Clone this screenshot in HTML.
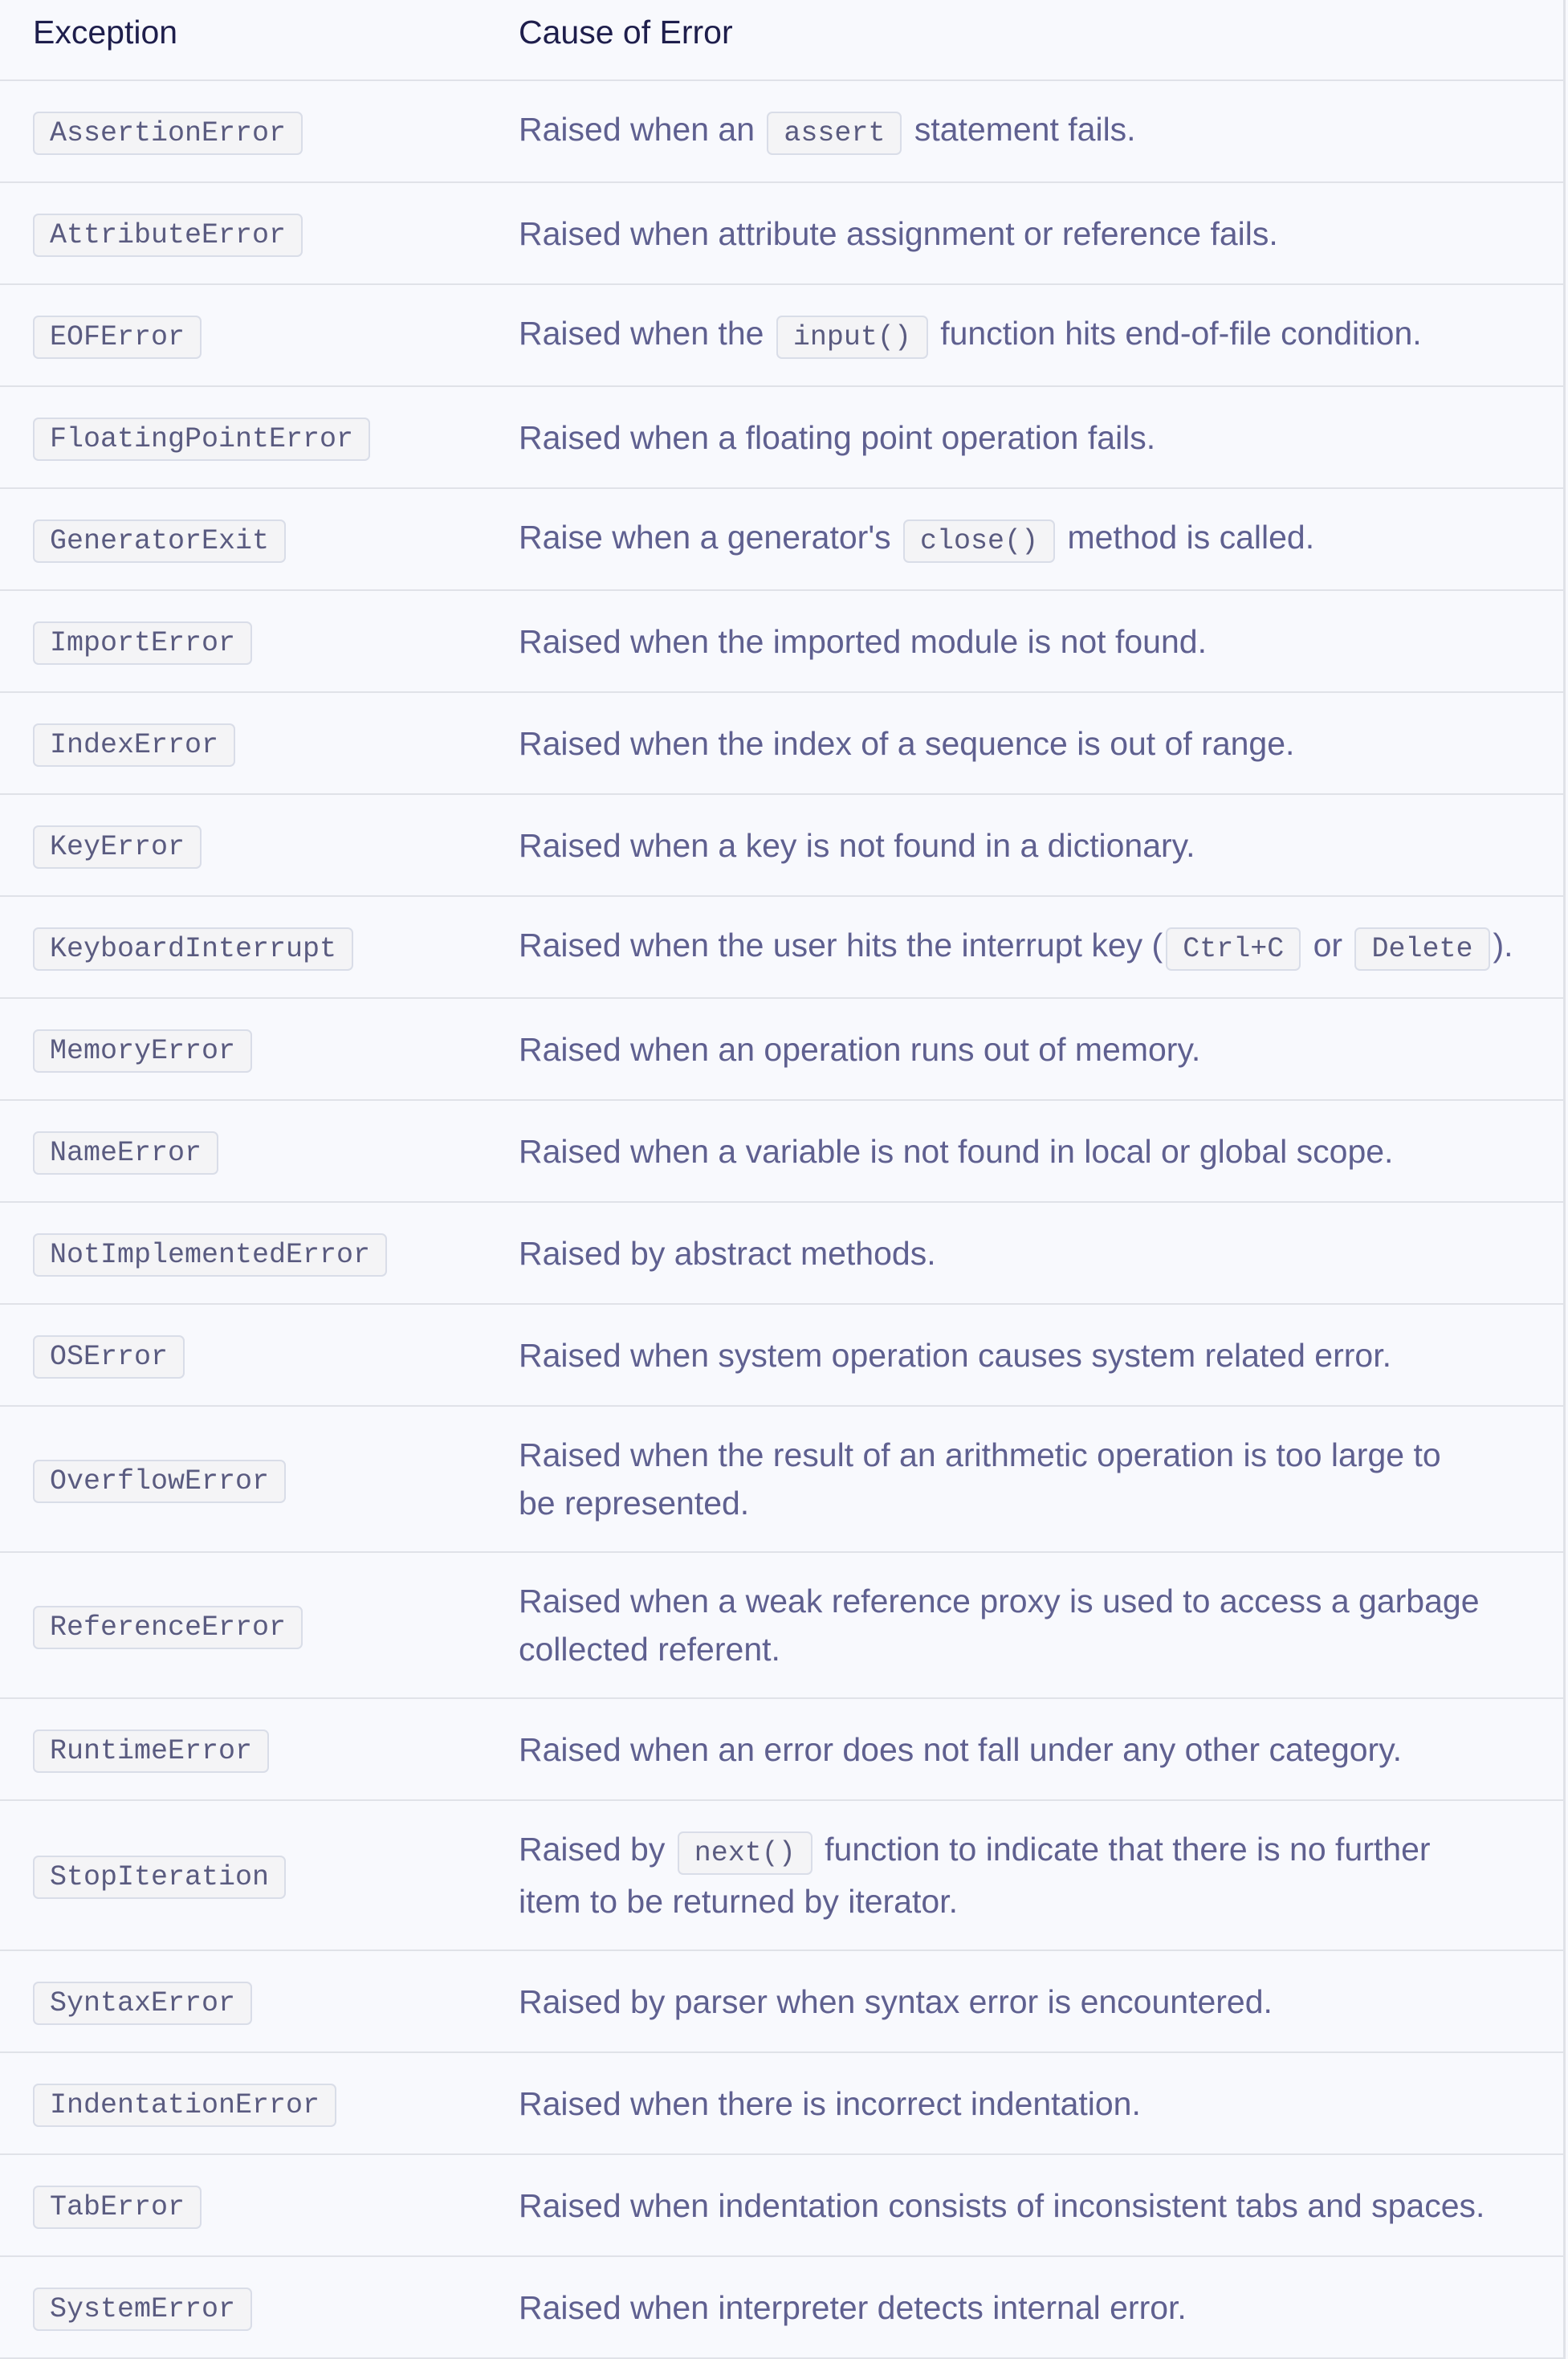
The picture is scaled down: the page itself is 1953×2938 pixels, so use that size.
<!DOCTYPE html>
<html><head><meta charset="utf-8"><style>
html,body{margin:0;padding:0;background:#f8f9fd;}
body{width:1953px;height:2837px;overflow:hidden;font-family:"Liberation Sans","DejaVu Sans",sans-serif;}
.t{width:1950px;border-right:3px solid #e0e2e8;box-sizing:border-box;}
.r{display:flex;align-items:center;border-bottom:2px solid #e0e2e8;padding:30px 0;line-height:60px;font-size:41px;color:#5f6090;}
.h{height:101px;box-sizing:border-box;padding:0;align-items:flex-start;color:#1e1e4c;font-size:41px;line-height:80px;}
.c1{width:605px;padding-left:41px;flex:none;}
.c2{white-space:nowrap;}
code{font-family:"Liberation Mono","DejaVu Sans Mono",monospace;font-size:35px;background:#f4f4f6;border:2px solid #d9dde8;border-radius:7px;padding:5px 19px;color:#5a5b80;margin:0 4px;}
.c1 code{margin:0;}
</style></head><body><div class="t">
<div class="r h"><div class="c1">Exception</div><div class="c2">Cause of Error</div></div>
<div class="r"><div class="c1"><code>AssertionError</code></div><div class="c2">Raised when an <code>assert</code> statement fails.</div></div>
<div class="r"><div class="c1"><code>AttributeError</code></div><div class="c2">Raised when attribute assignment or reference fails.</div></div>
<div class="r"><div class="c1"><code>EOFError</code></div><div class="c2">Raised when the <code>input()</code> function hits end-of-file condition.</div></div>
<div class="r"><div class="c1"><code>FloatingPointError</code></div><div class="c2">Raised when a floating point operation fails.</div></div>
<div class="r"><div class="c1"><code>GeneratorExit</code></div><div class="c2">Raise when a generator's <code>close()</code> method is called.</div></div>
<div class="r"><div class="c1"><code>ImportError</code></div><div class="c2">Raised when the imported module is not found.</div></div>
<div class="r"><div class="c1"><code>IndexError</code></div><div class="c2">Raised when the index of a sequence is out of range.</div></div>
<div class="r"><div class="c1"><code>KeyError</code></div><div class="c2">Raised when a key is not found in a dictionary.</div></div>
<div class="r"><div class="c1"><code>KeyboardInterrupt</code></div><div class="c2">Raised when the user hits the interrupt key (<code>Ctrl+C</code> or <code>Delete</code>).</div></div>
<div class="r"><div class="c1"><code>MemoryError</code></div><div class="c2">Raised when an operation runs out of memory.</div></div>
<div class="r"><div class="c1"><code>NameError</code></div><div class="c2">Raised when a variable is not found in local or global scope.</div></div>
<div class="r"><div class="c1"><code>NotImplementedError</code></div><div class="c2">Raised by abstract methods.</div></div>
<div class="r"><div class="c1"><code>OSError</code></div><div class="c2">Raised when system operation causes system related error.</div></div>
<div class="r"><div class="c1"><code>OverflowError</code></div><div class="c2">Raised when the result of an arithmetic operation is too large to<br>be represented.</div></div>
<div class="r"><div class="c1"><code>ReferenceError</code></div><div class="c2">Raised when a weak reference proxy is used to access a garbage<br>collected referent.</div></div>
<div class="r"><div class="c1"><code>RuntimeError</code></div><div class="c2">Raised when an error does not fall under any other category.</div></div>
<div class="r"><div class="c1"><code>StopIteration</code></div><div class="c2">Raised by <code>next()</code> function to indicate that there is no further<br>item to be returned by iterator.</div></div>
<div class="r"><div class="c1"><code>SyntaxError</code></div><div class="c2">Raised by parser when syntax error is encountered.</div></div>
<div class="r"><div class="c1"><code>IndentationError</code></div><div class="c2">Raised when there is incorrect indentation.</div></div>
<div class="r"><div class="c1"><code>TabError</code></div><div class="c2">Raised when indentation consists of inconsistent tabs and spaces.</div></div>
<div class="r"><div class="c1"><code>SystemError</code></div><div class="c2">Raised when interpreter detects internal error.</div></div>
</div></body></html>
